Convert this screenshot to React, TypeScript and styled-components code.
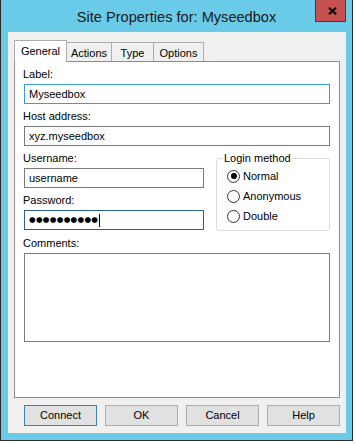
import styled, { createGlobalStyle } from "styled-components";

const GlobalStyle = createGlobalStyle`
  html, body {
    margin: 0;
    padding: 0;
    background: #ffffff;
  }
  body {
    font-family: "Liberation Sans", Arial, sans-serif;
    font-size: 11px;
    color: #000;
  }
`;

const tabs = [
  { name: "General", width: 53 },
  { name: "Actions", width: 46 },
  { name: "Type", width: 43 },
  { name: "Options", width: 51 },
];

const methods = ["Normal", "Anonymous", "Double"];

const buttons = ["Connect", "OK", "Cancel", "Help"];

export default function App() {
  return (
    <>
      <GlobalStyle />
      <Window>
        <TitleBar>
          <span />
          <Title>Site Properties for: Myseedbox</Title>
          <CloseButton>
            <svg width="9" height="8" viewBox="0 0 9 8">
              <path
                d="M1 0.8 L8 7.2 M8 0.8 L1 7.2"
                stroke="#000"
                strokeWidth="2.1"
                fill="none"
              />
            </svg>
          </CloseButton>
        </TitleBar>
        <Client>
          <TabStrip>
            {tabs.map((t, i) => (
              <Tab key={t.name} $active={i === 0} $width={t.width}>
                {t.name}
              </Tab>
            ))}
          </TabStrip>
          <Panel>
            <Field>
              <Label>Label:</Label>
              <TextBox $border="#3b9be0">Myseedbox</TextBox>
            </Field>
            <Field>
              <Label>Host address:</Label>
              <TextBox>xyz.myseedbox</TextBox>
            </Field>
            <CredRow>
              <Column>
                <Field>
                  <Label>Username:</Label>
                  <TextBox>username</TextBox>
                </Field>
                <Field>
                  <Label>Password:</Label>
                  <TextBox $border="#2a5f90">
                    <Dots>●●●●●●●●●●</Dots>
                    <Caret />
                  </TextBox>
                </Field>
              </Column>
              <GroupBox>
                <Legend>Login method</Legend>
                {methods.map((m, i) => (
                  <RadioRow key={m}>
                    <Radio $checked={i === 0} />
                    {m}
                  </RadioRow>
                ))}
              </GroupBox>
            </CredRow>
            <Field>
              <Label>Comments:</Label>
              <TextArea />
            </Field>
          </Panel>
          <ButtonRow>
            {buttons.map((b, i) => (
              <Button key={b} $default={i === 0}>
                {b}
              </Button>
            ))}
          </ButtonRow>
        </Client>
      </Window>
    </>
  );
}

const Window = styled.div`
  width: 353px;
  height: 441px;
  box-sizing: border-box;
  background: #69cbe8;
  border: 1px solid #2b2b2b;
  border-top: none;
  display: flex;
  flex-direction: column;
`;

const TitleBar = styled.div`
  height: 32px;
  flex: none;
  display: grid;
  grid-template-columns: 1fr auto 1fr;
`;

const Title = styled.div`
  font-size: 14.6px;
  line-height: 30px;
  padding-top: 2px;
  color: #1a1a1a;
  white-space: nowrap;
`;

const CloseButton = styled.div`
  justify-self: end;
  align-self: start;
  width: 31px;
  height: 22px;
  box-sizing: border-box;
  margin-right: 6px;
  background: #c75050;
  border: 1px solid #6e2a2a;
  border-top: none;
  display: flex;
  align-items: center;
  justify-content: center;
  padding: 1px 0 0 4px;
`;

const Client = styled.div`
  flex: 1;
  margin: 0 6px 7px 7px;
  background: #f0f0f0;
  display: flex;
  flex-direction: column;
  padding: 8px 6px 7px 6px;
  min-height: 0;
`;

const TabStrip = styled.div`
  display: flex;
  align-items: flex-end;
  height: 22px;
  margin-bottom: -1px;
  position: relative;
  z-index: 1;
`;

const Tab = styled.div<{ $active?: boolean; $width: number }>`
  width: ${({ $width }) => $width}px;
  box-sizing: border-box;
  border: 1px solid #acacac;
  border-bottom: none;
  text-align: center;
  line-height: 13px;
  padding-top: 4px;
  ${({ $active }) =>
    $active
      ? `
    height: 22px;
    background: #ffffff;
    position: relative;
    z-index: 2;
  `
      : `
    height: 19px;
    margin-bottom: 1px;
    margin-left: -1px;
    background: #f0f0f0;
  `}
`;

const Panel = styled.div`
  flex: 1;
  background: #ffffff;
  border: 1px solid #8c8c8c;
  padding: 5px 9px 0;
  display: flex;
  flex-direction: column;
  gap: 5px;
`;

const Field = styled.div`
  display: flex;
  flex-direction: column;
`;

const Label = styled.div`
  line-height: 14px;
  margin-bottom: 3px;
  margin-left: -1px;
`;

const TextBox = styled.div<{ $border?: string }>`
  height: 20px;
  box-sizing: border-box;
  border: 1px solid ${({ $border }) => $border ?? "#7a7a7a"};
  background: #ffffff;
  padding: 0 4px;
  line-height: 18px;
  white-space: nowrap;
  display: flex;
  align-items: center;
`;

const Dots = styled.span`
  font-family: "DejaVu Sans", sans-serif;
  font-size: 7.6px;
  letter-spacing: 0.3px;
`;

const Caret = styled.span`
  display: inline-block;
  width: 1px;
  height: 13px;
  background: #000;
  margin-left: 1px;
`;

const TextArea = styled.div`
  height: 89px;
  box-sizing: border-box;
  border: 1px solid #7a7a7a;
  background: #ffffff;
`;

const CredRow = styled.div`
  display: grid;
  grid-template-columns: 180px 1fr;
  column-gap: 12px;
  align-items: start;
`;

const Column = styled.div`
  display: flex;
  flex-direction: column;
  gap: 5px;
`;

const GroupBox = styled.fieldset`
  margin: 0;
  padding: 1px 6px 4px 6px;
  border: 1px solid #dcdcdc;
  border-radius: 3px;
  min-width: 0;
`;

const Legend = styled.legend`
  padding: 0 1px;
  line-height: 14px;
`;

const RadioRow = styled.div`
  height: 20px;
  display: flex;
  align-items: center;
  gap: 3px;
  padding-left: 4px;
`;

const Radio = styled.span<{ $checked?: boolean }>`
  width: 13px;
  height: 13px;
  box-sizing: border-box;
  border-radius: 50%;
  border: 1px solid #333333;
  background: #ffffff;
  display: flex;
  align-items: center;
  justify-content: center;
  flex: none;

  &::after {
    content: "";
    width: 6px;
    height: 6px;
    border-radius: 50%;
    background: #000;
    display: ${({ $checked }) => ($checked ? "block" : "none")};
  }
`;

const ButtonRow = styled.div`
  display: flex;
  justify-content: flex-end;
  gap: 8px;
  margin-top: 7px;
`;

const Button = styled.div<{ $default?: boolean }>`
  width: 73px;
  height: 21px;
  box-sizing: border-box;
  border: 1px solid ${({ $default }) => ($default ? "#3c7fb1" : "#adadad")};
  background: #e1e1e1;
  text-align: center;
  line-height: 19px;
`;
